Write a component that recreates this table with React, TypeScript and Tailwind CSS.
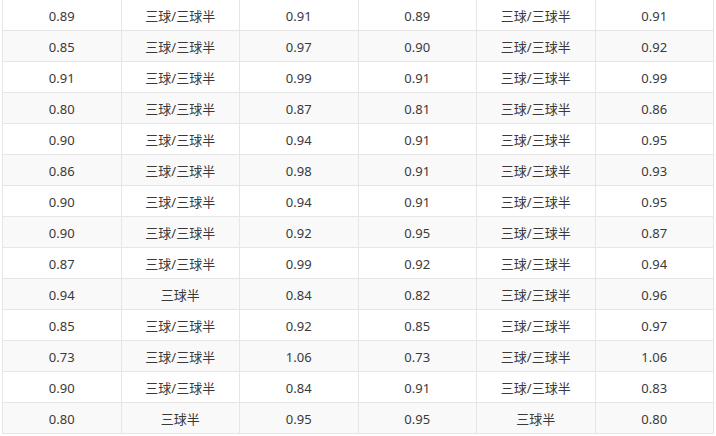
const rows: string[][] = [
  ['0.89', '三球/三球半', '0.91', '0.89', '三球/三球半', '0.91'],
  ['0.85', '三球/三球半', '0.97', '0.90', '三球/三球半', '0.92'],
  ['0.91', '三球/三球半', '0.99', '0.91', '三球/三球半', '0.99'],
  ['0.80', '三球/三球半', '0.87', '0.81', '三球/三球半', '0.86'],
  ['0.90', '三球/三球半', '0.94', '0.91', '三球/三球半', '0.95'],
  ['0.86', '三球/三球半', '0.98', '0.91', '三球/三球半', '0.93'],
  ['0.90', '三球/三球半', '0.94', '0.91', '三球/三球半', '0.95'],
  ['0.90', '三球/三球半', '0.92', '0.95', '三球/三球半', '0.87'],
  ['0.87', '三球/三球半', '0.99', '0.92', '三球/三球半', '0.94'],
  ['0.94', '三球半', '0.84', '0.82', '三球/三球半', '0.96'],
  ['0.85', '三球/三球半', '0.92', '0.85', '三球/三球半', '0.97'],
  ['0.73', '三球/三球半', '1.06', '0.73', '三球/三球半', '1.06'],
  ['0.90', '三球/三球半', '0.84', '0.91', '三球/三球半', '0.83'],
  ['0.80', '三球半', '0.95', '0.95', '三球半', '0.80'],
];

export default function App() {
  return (
    <div className="w-[716px] h-[436px] overflow-hidden bg-white pl-[2px]">
      <table
        className="w-[712px] table-fixed border-collapse text-[13px] text-[#3a3a3a] -mt-px"
        style={{ fontFamily: '"Noto Sans", "Noto Sans CJK SC", sans-serif' }}
      >
        <tbody>
          {rows.map((r, i) => (
            <tr key={i} className={i % 2 === 1 ? 'bg-[#f9f9f9]' : 'bg-white'}>
              {r.map((c, j) => (
                <td key={j} className="h-[31px] p-0 pt-[3px] text-center align-middle border border-[#e6e6e6]">
                  {c}
                </td>
              ))}
            </tr>
          ))}
        </tbody>
      </table>
    </div>
  );
}
